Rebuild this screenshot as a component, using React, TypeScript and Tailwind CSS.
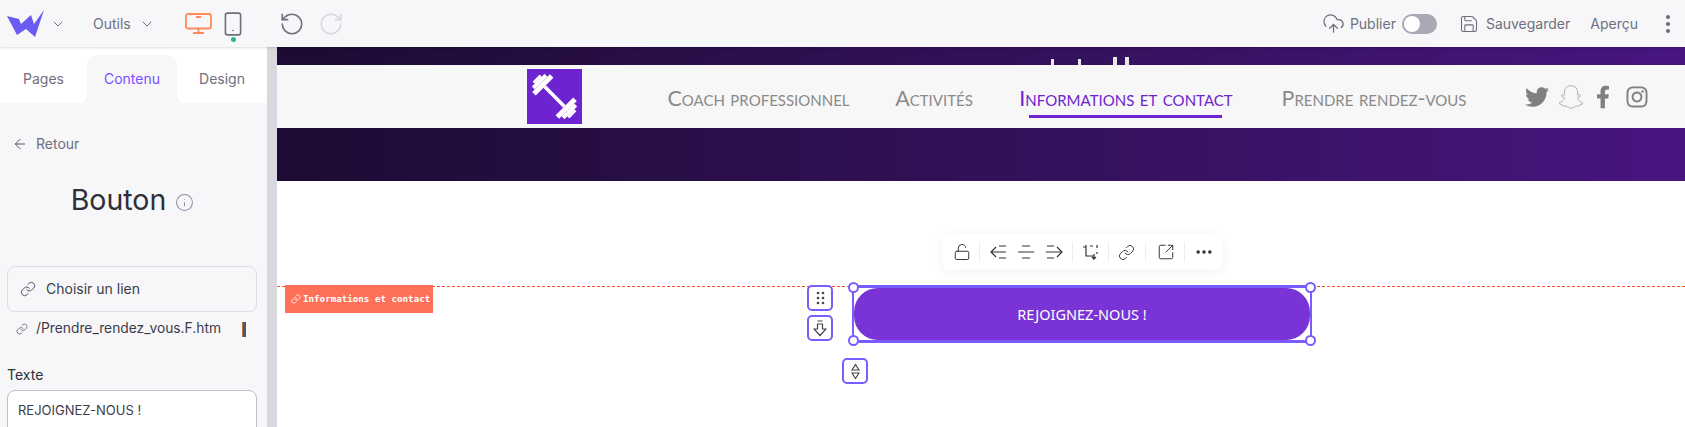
import { ArrowLeft, ChevronDown, CloudUpload, Ellipsis, EllipsisVertical, Info, Link, LockOpen, RotateCcw, RotateCw, Save, Smartphone, SquareArrowOutUpRight } from 'lucide-react'
import { FaFacebookF, FaInstagram, FaSnapchatGhost, FaTwitter } from 'react-icons/fa'

const navItems = [
  { label: 'Coach professionnel', width: 'w-[183px]' },
  { label: 'Activités', width: 'w-[72px]' },
  { label: 'Informations et contact', width: 'w-[216px]', active: true },
  { label: 'Prendre rendez-vous', width: 'w-[184px]' },
]

function WLogo() {
  return (
    <svg width="38" height="28" viewBox="0 0 38 28" className="text-[#6a5cf0]">
      <path fill="currentColor" d="M0 6 L12 9 L14 14 L24 5 L27 14 L37 0 L28 27 L19 19 L10 25 Z" />
    </svg>
  )
}

function MonitorIcon() {
  return (
    <svg width="27" height="21" viewBox="0 0 27 21" fill="none" stroke="#ff8a5c" strokeWidth="1.800">
      <rect x="1" y="1" width="25" height="14.500" rx="2" />
      <path d="M11 4h5M13.500 15.500V20M8 20h11" />
    </svg>
  )
}

function Dumbbell() {
  return (
    <svg width="55" height="55" viewBox="0 0 55 55">
      <g fill="#fff" transform="rotate(45 27.500 27.500)">
        <rect x="1.500" y="22.500" width="3" height="10" />
        <rect x="4.500" y="18.500" width="4" height="18" />
        <rect x="8.500" y="15" width="5" height="25" />
        <rect x="13.500" y="25.700" width="28" height="3.600" />
        <rect x="41.500" y="15" width="5" height="25" />
        <rect x="46.500" y="18.500" width="4" height="18" />
        <rect x="50.500" y="22.500" width="3" height="10" />
      </g>
    </svg>
  )
}

function AlignIcon({ side }: { side: 'left' | 'center' | 'right' }) {
  return (
    <svg width="18" height="16" viewBox="0 0 18 16" fill="none" stroke="#33333d" strokeWidth="1.200">
      {side === 'left' && <path d="M1 8h15M6 3l-5 5 5 5M9 2h7M9 14h7" />}
      {side === 'center' && <path d="M1 8h16M5 2h8M5 14h8" />}
      {side === 'right' && <path d="M1 8h15M12 3l5 5-5 5M2 2h7M2 14h7" />}
    </svg>
  )
}

function CropIcon() {
  return (
    <svg width="17" height="17" viewBox="0 0 17 17" fill="none" stroke="#33333d" strokeWidth="1.200">
      <path d="M1 3h3M4 1v11h8M8 2h3M15 1v3M15 8v2M12 10v5l2-2M12 15l-2-2" />
    </svg>
  )
}

function Sep() {
  return <div className="h-5 w-px bg-[#eeeef1]" />
}

function Handle({ className }: { className: string }) {
  return <div className={`absolute h-[11px] w-[11px] rounded-full border-2 border-[#7a5cff] bg-white ${className}`} />
}

export default function App() {
  return (
    <div className="flex h-[427px] w-[1685px] flex-col overflow-hidden bg-white font-['Inter',sans-serif] text-sm text-[#6f6f7d]">
      <header className="z-10 flex h-[47px] flex-shrink-0 items-center bg-[#f7f7fa] shadow-sm">
        <div className="ml-[7px]">
          <WLogo />
        </div>
        <ChevronDown className="ml-[5px] h-4 w-4" strokeWidth={1.500} />
        <span className="ml-[27px]">Outils</span>
        <ChevronDown className="ml-[8px] h-4 w-4" strokeWidth={1.500} />
        <div className="ml-[30px]">
          <MonitorIcon />
        </div>
        <div className="relative ml-[8px]">
          <Smartphone className="h-[26px] w-[26px]" strokeWidth={1.500} />
          <div className="absolute left-[11px] top-[26px] h-[5px] w-[5px] rounded-full bg-[#2fb58a]" />
        </div>
        <RotateCcw className="ml-[33px] h-[26px] w-[26px]" strokeWidth={1.500} />
        <RotateCw className="ml-[13px] h-[26px] w-[26px] text-[#d8d8de]" strokeWidth={1.500} />

        <CloudUpload className="ml-auto h-[23px] w-[23px]" strokeWidth={1.300} />
        <span className="ml-[5px]">Publier</span>
        <div className="ml-[6px] flex h-5 w-[35px] items-center rounded-full bg-[#a9a9b5] pl-[2px]">
          <div className="h-4 w-4 rounded-full bg-white" />
        </div>
        <Save className="ml-[22px] h-5 w-5" strokeWidth={1.300} />
        <span className="ml-[7px]">Sauvegarder</span>
        <span className="ml-[20px]">Aperçu</span>
        <EllipsisVertical className="ml-[18px] mr-[5px] h-6 w-6" strokeWidth={2.200} />
      </header>

      <div className="flex min-h-0 flex-1">
        <aside className="flex w-[267px] flex-shrink-0 flex-col overflow-hidden bg-[#f7f7fa]">
          <div className="flex h-[56px] flex-shrink-0">
            <div className="flex w-[87px] items-center justify-center rounded-br-lg bg-white pt-2">Pages</div>
            <div className="w-[90px] bg-white pt-2">
              <div className="flex h-full items-center justify-center rounded-t-xl bg-[#f7f7fa] text-[#7c4dff]">Contenu</div>
            </div>
            <div className="flex w-[90px] items-center justify-center rounded-bl-lg bg-white pt-2">Design</div>
          </div>
          <div className="mt-[31px] flex h-5 flex-shrink-0 items-center gap-2 pl-[12px]">
            <ArrowLeft className="h-4 w-4 text-[#555563]" strokeWidth={1.500} />
            <span>Retour</span>
          </div>
          <div className="mt-[29px] flex flex-shrink-0 items-center justify-center gap-[9px] pr-[2px]">
            <span className="text-[28.500px] leading-[34px] text-[#2f2f38]">Bouton</span>
            <Info className="mt-[4px] h-[19px] w-[19px] text-[#8a8fa8]" strokeWidth={1.300} />
          </div>
          <div className="ml-[7px] mr-[10px] mt-[49px] flex h-[46px] flex-shrink-0 items-center gap-[10px] rounded-lg border border-[#dcdce2] pl-[12px] text-[#3c3c48]">
            <Link className="h-4 w-4" strokeWidth={1.300} />
            <span>Choisir un lien</span>
          </div>
          <div className="mt-[7px] flex h-5 flex-shrink-0 items-center pl-[16px] text-[13.800px] text-[#3c3c48]">
            <Link className="h-3 w-3" strokeWidth={1.300} />
            <span className="ml-[8px]">/Prendre_rendez_vous.F.htm</span>
            <div className="ml-[21px] h-[15px] w-[4px] border-l border-[#b87a3c] bg-[#55556a]" />
          </div>
          <label className="ml-[7px] mt-[26px] h-5 flex-shrink-0 text-[#2f2f38]">Texte</label>
          <div className="ml-[7px] mr-[10px] mt-[5px] flex h-[50px] flex-shrink-0 items-start rounded-lg border border-[#c0c0c8] bg-white pl-[10px] pt-[10px] text-[13px] text-[#3c3c48]">
            REJOIGNEZ-NOUS !
          </div>
        </aside>
        <div className="w-[10px] flex-shrink-0 bg-[#d8d8de]" />

        <main className="flex min-w-0 flex-1 flex-col">
          <section className="h-[134px] flex-shrink-0 bg-gradient-to-r from-[#1d0b33] to-[#47157f] pt-[18px]">
            <div className="relative flex h-[63px] items-center bg-[#f7f7f7] pl-[250px]">
              <div className="absolute -top-[8px] left-[774px] flex h-[8px] items-end">
                <div className="h-[6px] w-[3px] bg-white/90" />
                <div className="ml-[24px] h-[6px] w-[3px] bg-white/90" />
                <div className="ml-[32px] h-[8px] w-[4px] bg-white/90" />
                <div className="ml-[8px] h-[8px] w-[4px] bg-white/90" />
              </div>
              <div className="h-[55px] w-[55px] bg-[#6d23cf]">
                <Dumbbell />
              </div>
              <nav className="ml-[85px] flex gap-[48px] font-['Lato',sans-serif] text-[21.500px] [font-variant-caps:small-caps]">
                {navItems.map((item) => (
                  <div
                    key={item.label}
                    className={`relative flex justify-center whitespace-nowrap pt-[3px] ${item.width} ${item.active ? 'text-[#6d23cf]' : 'text-[#8a8a8a]'}`}
                  >
                    {item.label}
                    {item.active && <div className="absolute -bottom-[5px] left-[11px] h-[3px] w-[193px] bg-[#6d23cf]" />}
                  </div>
                ))}
              </nav>
              <div className="ml-[59px] flex items-center gap-[10px] text-[#808080]">
                <FaTwitter className="h-6 w-6" />
                <FaSnapchatGhost className="h-6 w-6 text-[#f7f7f7] stroke-[#9a9a9a] [stroke-width:16]" />
                <FaFacebookF className="ml-[3px] h-6 w-[14px]" />
                <FaInstagram className="ml-[5px] h-6 w-6" />
              </div>
            </div>
          </section>

          <section className="relative flex-1 pl-[575px] pt-[104px]">
            <div className="absolute left-0 right-0 top-[105px] h-px bg-[repeating-linear-gradient(90deg,#ff4d2e_0,#ff4d2e_3px,transparent_3px,transparent_5px)]" />
            <div className="absolute left-[8px] top-[104px] flex h-[28px] w-[148px] items-center gap-[2px] bg-[#ff7059] pl-[6px] font-['DejaVu_Sans_Mono',monospace] text-[9.200px] font-bold text-white">
              <Link className="h-[10px] w-[10px]" strokeWidth={2} />
              <span>Informations et contact</span>
            </div>

            <div className="absolute left-[665px] top-[53px] flex h-[36px] w-[281px] items-center rounded-lg bg-white pl-[11px] text-[#33333d] shadow-[0_2px_12px_rgba(0,0,0,0.06)]">
              <LockOpen className="h-[18px] w-[18px]" strokeWidth={1.300} />
              <div className="ml-[8px]"><Sep /></div>
              <div className="ml-[10px]"><AlignIcon side="left" /></div>
              <div className="ml-[9px]"><AlignIcon side="center" /></div>
              <div className="ml-[10px]"><AlignIcon side="right" /></div>
              <div className="ml-[9px]"><Sep /></div>
              <div className="ml-[9px]"><CropIcon /></div>
              <div className="ml-[9px]"><Sep /></div>
              <Link className="ml-[9px] h-[17px] w-[17px]" strokeWidth={1.300} />
              <div className="ml-[10px]"><Sep /></div>
              <SquareArrowOutUpRight className="ml-[11px] h-[18px] w-[18px]" strokeWidth={1.300} />
              <div className="ml-[9px]"><Sep /></div>
              <Ellipsis className="ml-[9px] h-5 w-5" strokeWidth={2.200} />
            </div>

            <div className="absolute left-[530px] top-[104px] flex h-[26px] w-[26px] items-center justify-center rounded-[5px] border-2 border-[#7a5cff] bg-white">
              <svg width="9" height="14" viewBox="0 0 9 14" fill="#44444f">
                <circle cx="2" cy="2" r="1.300" /><circle cx="7" cy="2" r="1.300" />
                <circle cx="2" cy="7" r="1.300" /><circle cx="7" cy="7" r="1.300" />
                <circle cx="2" cy="12" r="1.300" /><circle cx="7" cy="12" r="1.300" />
              </svg>
            </div>
            <div className="absolute left-[530px] top-[134px] flex h-[26px] w-[26px] items-center justify-center rounded-[5px] border-2 border-[#7a5cff] bg-white">
              <svg width="14" height="17" viewBox="0 0 14 17" fill="none" stroke="#44444f" strokeWidth="1.200">
                <path d="M4.500 1h5M4.500 4h5v5h3.500L7 15.500 1 9h3.500z" />
              </svg>
            </div>
            <div className="absolute left-[565px] top-[177px] flex h-[26px] w-[26px] items-center justify-center rounded-[5px] border-2 border-[#7a5cff] bg-white">
              <svg width="9" height="17" viewBox="0 0 9 17" fill="none" stroke="#44444f" strokeWidth="1.200">
                <path d="M4.500 1.500 8 7H1zM1 10h7l-3.500 5.500z" />
              </svg>
            </div>

            <div className="relative h-[58px] w-[460px] border-x-2 border-y-[3px] border-[#7a5cff] bg-white">
              <div className="flex h-full items-center justify-center rounded-[24px] bg-[#7a33d6] font-['Noto_Sans',sans-serif] text-[14.500px] text-white">
                REJOIGNEZ-NOUS !
              </div>
              <Handle className="-left-[6px] -top-[6px]" />
              <Handle className="-right-[6px] -top-[6px]" />
              <Handle className="-bottom-[6px] -left-[6px]" />
              <Handle className="-bottom-[6px] -right-[6px]" />
            </div>
          </section>
        </main>
      </div>
    </div>
  )
}
